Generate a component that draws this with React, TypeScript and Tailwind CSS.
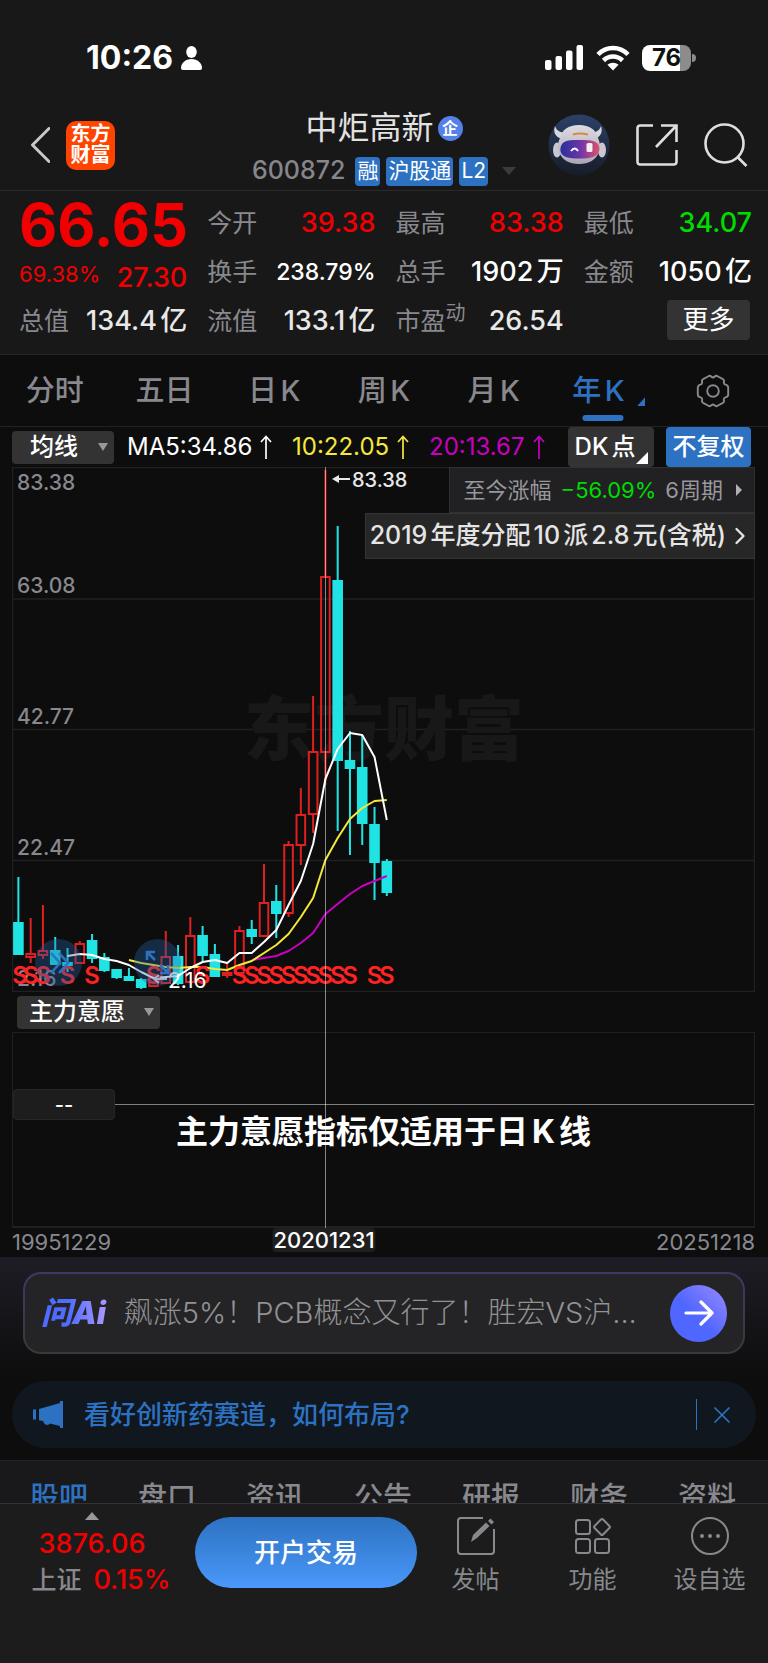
import React from 'react';
import { ChevronRight, X } from 'lucide-react';

const FONT = "font-[Inter,'Noto_Sans_CJK_SC',sans-serif]";

type Candle = [high: number, top: number, bottom: number, low: number, up: 0 | 1];

/** Yearly candles, 1995 - 2025, in chart units */
const candles: Candle[] = [
  [410, 456, 487, 487, 0],
  [451, 487, 490, 496, 1],
  [438, 484, 488, 492, 1],
  [470, 484, 497, 498, 0],
  [481, 496, 498, 505, 0],
  [474, 477, 496, 497, 1],
  [467, 474, 491, 496, 0],
  [486, 491, 503, 505, 0],
  [502, 503, 510, 512, 0],
  [501, 510, 513, 513, 0],
  [511, 513, 520, 522, 0],
  [508, 511, 519, 520, 1],
  [464, 490, 516, 517, 1],
  [478, 490, 516, 518, 0],
  [450, 469, 515, 516, 1],
  [459, 469, 488, 494, 0],
  [477, 488, 509, 510, 0],
  [497, 506, 508, 511, 1],
  [459, 464, 506, 507, 1],
  [453, 463, 469, 477, 0],
  [397, 436, 469, 470, 1],
  [418, 435, 446, 471, 0],
  [374, 378, 446, 450, 1],
  [321, 348, 378, 398, 1],
  [229, 285, 347, 366, 1],
  [3, 110, 285, 318, 1],
  [59, 114, 293, 364, 0],
  [264, 294, 301, 388, 0],
  [268, 301, 356, 378, 0],
  [340, 358, 395, 433, 0],
  [392, 395, 425, 429, 0],
];

const ma5 = [
  489, 487, 488, 492, 494, 498, 505, 511, 510, 509, 501, 495, 493, 496, 486, 486, 475, 463, 438, 414, 377, 312, 282,
  266, 268, 290, 353,
];
const ma10 = [
  493, 496, 498, 500, 501, 500, 500, 502, 503, 498, 494, 486, 478, 467, 450, 431, 393, 371, 352, 341, 334, 333,
];
const ma20 = [493, 491, 489, 484, 476, 466, 447, 437, 427, 419, 414, 409];

const signals = [0, 1, 2, 4, 6, 11, 15, 18, 19, 20, 21, 22, 23, 24, 25, 26, 27, 29, 30];

const getX = (index: number) => 6.4 + index * 12.28;

const getPoints = (values: number[], start: number) =>
  values.map((value, index) => `${getX(start + index)},${value}`).join(' ');

const StatusBar = () => (
  <div className="h-[105px] pt-[10px] pl-[86px] pr-[72px] flex items-center justify-between text-white">
    <div className="flex items-center gap-2">
      <span className="text-[32px] font-bold">10:26</span>
      <svg className="w-[21px] h-6" viewBox="0 0 21 24" fill="currentColor">
        <ellipse cx="10.5" cy="6" rx="5.3" ry="6" />
        <path d="M0 22c0-5 4.500-9 10.500-9s10.500 4 10.500 9c0 1.300-.7 2-2 2H2c-1.300 0-2-.7-2-2z" />
      </svg>
    </div>
    <div className="flex items-center gap-3">
      <svg className="w-[39px] h-[26px]" viewBox="0 0 39 26" fill="currentColor">
        <rect x="0" y="15" width="6.500" height="10" rx="2" />
        <rect x="10.500" y="11" width="6.500" height="14" rx="2" />
        <rect x="21" y="5.500" width="6.500" height="19.500" rx="2" />
        <rect x="31.500" y="0" width="6.500" height="25" rx="2" />
      </svg>
      <svg className="w-[34px] h-[26px]" viewBox="0 0 34 26" fill="none" stroke="currentColor">
        <path d="M2 9.500C10.500.9 23.500.9 32 9.500" strokeWidth="4.600" />
        <path d="M7.500 15.500c5.500-5.300 13.500-5.300 19 0" strokeWidth="4.600" />
        <path d="M17 25.500l-5.600-5.700c3.200-2.800 8-2.800 11.200 0z" fill="currentColor" stroke="none" />
      </svg>
      <div className="flex items-center gap-px">
        <div className="w-[49px] h-[26px] rounded-lg bg-linear-to-r from-white from-77% to-[#8c8c8c] to-77% text-[#111] text-2xl font-bold flex items-center justify-center">
          76
        </div>
        <div className="w-1 h-2 rounded-r-full bg-[#8c8c8c]" />
      </div>
    </div>
  </div>
);

const RobotAvatar = () => (
  <svg className="w-[62px] h-[62px]" viewBox="0 0 62 62">
    <defs>
      <linearGradient id="robot-bg" x1="0" y1="0" x2="0" y2="1">
        <stop offset="0" stopColor="#2c4068" />
        <stop offset="1" stopColor="#171c28" />
      </linearGradient>
      <linearGradient id="robot-head" x1="0" y1="0" x2="0" y2="1">
        <stop offset="0" stopColor="#dddbe2" />
        <stop offset="1" stopColor="#aaa6b4" />
      </linearGradient>
      <linearGradient id="robot-face" x1="0" y1="0" x2="1" y2="0">
        <stop offset="0" stopColor="#27309a" />
        <stop offset=".5" stopColor="#6a35a8" />
        <stop offset="1" stopColor="#e0526c" />
      </linearGradient>
    </defs>
    <circle cx="31" cy="31" r="30.500" fill="url(#robot-bg)" />
    <path
      d="M7 12c-2 6 0 11 7 13l6-6c-6 0-11-1-13-7zM53 12c2 6 0 11-7 13l-6-6c6 0 11-1 13-7z"
      fill="#d9d7de"
    />
    <ellipse cx="9" cy="36" rx="4" ry="7.500" fill="#c9c6d0" />
    <ellipse cx="54" cy="36" rx="4" ry="7.500" fill="#c9c6d0" />
    <path
      d="M31 11c11 0 17 5 19 13 2 5 3 9 1 14-3 8-10 12-20 12s-17-4-20-12c-2-5-1-9 1-14 2-8 8-13 19-13z"
      fill="url(#robot-head)"
    />
    <path d="M25 20.500q6-2 15 0" stroke="#d98a3c" strokeWidth="2.200" fill="none" />
    <path
      d="M31 26c9 0 16 0 19 4 3 5 1 11-5 13-8 2-20 2-27 0-6-2-7-8-4-13 3-4 9-4 17-4z"
      fill="url(#robot-face)"
    />
    <path d="M23 37q4-5 7 0" stroke="#fff" strokeWidth="2" fill="none" />
    <rect x="38.500" y="29" width="6" height="9" rx="1.500" fill="#fff" opacity=".9" />
  </svg>
);

const Tag = ({ children }: { children: React.ReactNode }) => (
  <span className="h-[29px] px-[2px] rounded-sm bg-[#2d72c2] text-white text-[21px] flex items-center">{children}</span>
);

const Header = () => (
  <header className="h-[86px] border-b border-[#2a2a2a] grid grid-cols-[1fr_auto_1fr] items-center">
    <div className="flex items-center gap-4 pl-[30px] pb-3">
      <button aria-label="返回" className="text-[#c8c8c8]">
        <svg className="w-5 h-9" viewBox="0 0 20 36" fill="none" stroke="currentColor" strokeWidth="3">
          <path d="M19 1.500L2.500 18 19 34.500" strokeLinecap="round" strokeLinejoin="round" />
        </svg>
      </button>
      <a
        href="#home"
        className="w-[49px] h-[49px] rounded-[10px] bg-[#ff4400] text-white text-xl leading-[21px] font-bold text-center flex flex-col justify-center"
      >
        <span>东方</span>
        <span>财富</span>
      </a>
    </div>
    <div className="flex flex-col items-center pb-[6px]">
      <h1 className="flex items-center gap-1 text-[#e2e2e2] text-[32px] leading-[46px]">
        中炬高新
        <span className="w-[25px] h-[25px] rounded-full bg-[#5580e8] text-white text-base leading-[25px] font-bold text-center">
          企
        </span>
      </h1>
      <div className="flex items-center gap-[6px] h-10">
        <span className="text-[25px] font-medium text-[#86868c] mr-1">600872</span>
        <Tag>融</Tag>
        <Tag>沪股通</Tag>
        <Tag>L2</Tag>
        <span className="ml-2 border-x-[7px] border-t-8 border-x-transparent border-t-[#3c3c3e]" />
      </div>
    </div>
    <div className="flex items-center justify-end gap-[26px] pr-5 pb-3 text-[#dedede]">
      <button aria-label="智能助手">
        <RobotAvatar />
      </button>
      <button aria-label="分享">
        <svg className="w-[42px] h-[42px]" viewBox="0 0 42 42" fill="none" stroke="currentColor" strokeWidth="2.600">
          <path d="M17 1.500H4A2.500 2.500 0 0 0 1.500 4v34A2.500 2.500 0 0 0 4 40.500h34a2.500 2.500 0 0 0 2.500-2.500V26" />
          <path d="M25 1.500h15.500V18M40.500 1.500L20 23" />
        </svg>
      </button>
      <button aria-label="搜索">
        <svg className="w-[44px] h-[44px]" viewBox="0 0 44 44" fill="none" stroke="currentColor" strokeWidth="2.600">
          <circle cx="20.500" cy="20.500" r="19" />
          <path d="M33 33.500l9.500 9.500" />
        </svg>
      </button>
    </div>
  </header>
);

interface QuoteCellProps {
  label: string;
  value: string;
  sup?: string;
  valueClass?: string;
}

const QuoteCell: React.FC<QuoteCellProps> = ({ label, value, sup, valueClass = 'text-[27px] text-[#e8e8e8]' }) => (
  <div className="flex items-center justify-between whitespace-nowrap">
    <span className="flex text-[25px] text-[#88888e]">
      {label}
      {sup && <span className="text-xl -mt-1">{sup}</span>}
    </span>
    <span className={`font-medium ${valueClass}`}>{value}</span>
  </div>
);

const Quote = () => (
  <section className="pt-2 pb-2 pl-[19px] pr-4 grid grid-cols-4 gap-x-5 auto-rows-[49px] border-b border-[#242424]">
    <div className="flex items-center pt-1 text-[59px] font-bold text-[#f00000]">66.65</div>
    <QuoteCell label="今开" value="39.38" valueClass="text-[27px] text-[#f00000]" />
    <QuoteCell label="最高" value="83.38" valueClass="text-[27px] text-[#f00000]" />
    <QuoteCell label="最低" value="34.07" valueClass="text-[27px] text-[#00dc00]" />
    <div className="flex items-center justify-between pt-1 text-[#f00000]">
      <span className="text-[22px]">69.38%</span>
      <span className="text-[27px] pt-2 font-medium">27.30</span>
    </div>
    <QuoteCell label="换手" value="238.79%" valueClass="text-[23px] text-white" />
    <QuoteCell label="总手" value="1902万" valueClass="text-[27px] text-white" />
    <QuoteCell label="金额" value="1050亿" valueClass="text-[27px] text-white" />
    <QuoteCell label="总值" value="134.4亿" />
    <QuoteCell label="流值" value="133.1亿" />
    <QuoteCell label="市盈" sup="动" value="26.54" />
    <div className="flex items-center justify-end pr-[2px] pb-1">
      <button className="w-[83px] h-10 rounded bg-[#333] text-white text-[26px] leading-none">更多</button>
    </div>
  </section>
);

const periods = ['分时', '五日', '日K', '周K', '月K', '年K'];

const PeriodTabs = () => (
  <nav className="h-[72px] grid grid-cols-7 border-b border-[#222]">
    {periods.map((period) => {
      const active = period === '年K';
      return (
        <button
          key={period}
          className={`relative text-[29px] font-medium ${active ? 'pr-[10px] text-[#2d72c2]' : 'text-[#88888e]'}`}
        >
          {period}
          {active && (
            <>
              <span className="absolute right-[13px] bottom-5 w-2 h-[9px] bg-[#2d72c2] [clip-path:polygon(100%_0,100%_100%,0_100%)]" />
              <span className="absolute bottom-[5px] left-1/2 -translate-x-1/2 w-[41px] h-[6px] rounded-full bg-[#2d72c2]" />
            </>
          )}
        </button>
      );
    })}
    <button aria-label="设置" className="flex items-center justify-center text-[#88888e]">
      <svg className="w-[34px] h-[34px]" viewBox="0 0 34 34" fill="none" stroke="currentColor" strokeWidth="1.900">
        <path
          strokeLinejoin="round"
          d="M12 2.500q2-1.500 3.500.3 1.500 1.400 3 0Q20 1 22 2.500l4.500 2.300q2 .9 1.400 3.200-.4 2 1.600 2.600 2.700.7 2.700 3v6.800q0 2.300-2.700 3-2 .6-1.600 2.600.6 2.300-1.400 3.200L22 31.500q-2 1.500-3.500-.3-1.500-1.400-3 0-1.500 1.800-3.500.3l-4.500-2.300q-2-.9-1.400-3.200.4-2-1.600-2.600-2.700-.7-2.700-3v-6.800q0-2.300 2.700-3 2-.6 1.600-2.600-.6-2.300 1.400-3.200z"
        />
        <circle cx="17" cy="17" r="5.800" />
      </svg>
    </button>
  </nav>
);

const Caret = () => <span className="border-x-[5px] border-t-8 border-x-transparent border-t-[#98989c]" />;

const UpArrow = () => (
  <svg className="w-3 h-6" viewBox="0 0 12 24" fill="none" stroke="currentColor" strokeWidth="1.700">
    <path d="M6 24V1.500M1 7l5-5.500L11 7" />
  </svg>
);

const IndicatorRow = () => (
  <div className="h-10 flex items-center text-2xl whitespace-nowrap">
    <button className="w-[102px] h-[33px] pl-[18px] pr-[6px] rounded bg-[#333] text-white font-medium leading-none flex items-center justify-between">
      均线
      <Caret />
    </button>
    <span className="ml-[13px] w-[165px] flex items-center gap-2 text-white">
      MA5:34.86
      <UpArrow />
    </span>
    <span className="w-[137px] flex items-center gap-2 text-[#f5e83c]">
      10:22.05
      <UpArrow />
    </span>
    <span className="flex items-center gap-2 text-[#c800c0]">
      20:13.67
      <UpArrow />
    </span>
    <div className="ml-auto flex gap-3 pr-1 font-medium text-white">
      <button className="relative w-[86px] h-10 pr-3 rounded bg-[#333]">
        DK点
        <span className="absolute right-[6px] bottom-[3px] w-3 h-3 bg-white [clip-path:polygon(100%_0,100%_100%,0_100%)]" />
      </button>
      <button className="w-[85px] h-10 rounded bg-[#2d72c2]">不复权</button>
    </div>
  </div>
);

const KLineChart = () => (
  <svg className="block w-full" viewBox="0 0 743 525">
    <g stroke="#202020" strokeWidth="1.500">
      <path d="M0 .5H743M0 132H743M0 262.500H743M0 393.500H743M0 524.500H743M.5 0V525M742.500 0V525" />
    </g>
    <text x="372" y="288" textAnchor="middle" fontSize="70" fontWeight="900" fill="#181818">
      东方财富
    </text>
    <g fontSize="21" fontWeight="500" fill="#88888e">
      <text x="5" y="23">83.38</text>
      <text x="5" y="126">63.08</text>
      <text x="5" y="257">42.77</text>
      <text x="5" y="388">22.47</text>
      <text x="5" y="519">2.16</text>
    </g>
    {candles.map(([high, top, bottom, low, up], index) => {
      const x = getX(index);
      const color = up ? '#e02020' : '#20e4e4';
      return (
        <g key={index} stroke={color} strokeWidth="2">
          <path d={`M${x} ${high}V${top}M${x} ${bottom}V${low}`} />
          <rect x={x - 4.3} y={top} width="8.600" height={bottom - top} fill={up ? 'none' : color} />
        </g>
      );
    })}
    <g fill="none" strokeWidth="2" strokeLinejoin="round">
      <polyline points={getPoints(ma20, 19)} stroke="#c800c0" />
      <polyline points={getPoints(ma10, 9)} stroke="#f5e83c" />
      <polyline points={getPoints(ma5, 4)} stroke="#fff" />
    </g>
    <g fontSize="24" fontWeight="600" fill="#ff2222" textAnchor="middle">
      {signals.map((index) => (
        <text key={index} x={Math.max(getX(index), 8)} y="517">
          S
        </text>
      ))}
    </g>
    <text x="156" y="521" fontSize="21" fill="#fff">
      2.16
    </text>
    <path d="M155 512h-13m5-4l-5 4 5 4" stroke="#ddd" strokeWidth="2" fill="none" />
    <circle cx="46.500" cy="495.500" r="23.500" fill="#2460a8" opacity=".35" />
    <circle cx="145.500" cy="495.500" r="23.500" fill="#2460a8" opacity=".35" />
    <g fill="none" stroke="#2d72c2" strokeWidth="2.600">
      <path d="M39 486l9 10-9 10M47 486l9 10-9 10" />
      <path d="M143 485h-8v8M135 485l8 8M148 506h8v-8M156 506l-8-8" />
    </g>
    <g fill="#e8e8e8" stroke="#e8e8e8">
      <path d="M326 12h12" strokeWidth="2" />
      <path d="M320 12l7-4v8z" stroke="none" />
      <text x="340" y="20" fontSize="20" fontWeight="500" stroke="none">
        83.38
      </text>
    </g>
  </svg>
);

const ChartPanel = () => (
  <section className="pl-3 pr-[13px]">
    <IndicatorRow />
    <div className="relative">
      <KLineChart />
      <div className="absolute top-0 right-0 flex flex-col items-end whitespace-nowrap">
        <button className="h-[46px] pl-[14px] pr-3 flex items-center gap-[9px] bg-[#212124] border border-[#303030] text-[22px] text-[#98989c] [text-autospace:no-autospace]">
          <span>至今涨幅</span>
          <span className="text-[#00dc00]">−56.09%</span>
          <span>6周期</span>
          <span className="ml-1 border-y-[6px] border-l-[6px] border-y-transparent border-l-[#b0b0b0]" />
        </button>
        <button className="h-[46px] pl-1 flex items-center bg-[#272727] border border-[#343434] text-[25px] font-medium text-[#e5e5e5]">
          2019年度分配10派2.8元(含税)
          <ChevronRight className="w-7 h-7" strokeWidth={2} />
        </button>
      </div>

      <div className="h-10 pl-[5px] flex items-center">
        <button className="w-[143px] h-[33px] pl-3 pr-[6px] rounded bg-[#333] text-white text-2xl leading-none font-medium flex items-center justify-between">
          主力意愿
          <Caret />
        </button>
      </div>

      <div className="relative h-[196px] pt-14 border border-b-2 border-[#202020]">
        <div className="flex items-center">
          <div className="w-[102px] h-[31px] rounded-sm bg-[#1d1d1d] border border-[#262626] text-white text-xl font-medium flex items-center justify-center">
            --
          </div>
          <div className="flex-1 h-px bg-[#808080]" />
        </div>
        <p className="text-center text-[32px] leading-6 font-bold text-white">主力意愿指标仅适用于日K线</p>
      </div>

      {/* Crosshair */}
      <div className="absolute top-0 bottom-0 left-[42%] w-px translate-x-px bg-white/50" />
    </div>
    <div className="relative h-[29px] flex justify-between text-[22px] leading-7 text-[#88888e]">
      <span>19951229</span>
      <span className="absolute left-[42%] -translate-x-1/2 h-6 px-px leading-6 rounded-sm bg-[#1f1f1f] font-medium text-white">
        20201231
      </span>
      <span>20251218</span>
    </div>
  </section>
);

const AskAi = () => (
  <section className="px-[23px] pt-[15px] pb-[27px] bg-linear-to-b from-[#1e1d25] to-[#0d0d0d]">
    <form className="rounded-[18px] p-[2px] bg-linear-to-b from-[#3a3a66] to-[#3a3838]">
      <div className="h-[78px] rounded-2xl bg-[#242426] flex items-center px-4 gap-[14px]">
        <label
          htmlFor="ask"
          className="pr-1 text-[31px] leading-9 font-black italic whitespace-nowrap text-transparent bg-clip-text bg-linear-to-r from-[#4f6cff] from-40% to-[#b49aff] [text-autospace:no-autospace]"
        >
          问Ai
        </label>
        <input
          id="ask"
          type="text"
          placeholder="飙涨5%！PCB概念又行了！胜宏VS沪..."
          className="flex-1 min-w-0 bg-transparent outline-none text-[29px] font-light text-white placeholder:text-[#929294] [text-autospace:no-autospace]"
        />
        <button
          type="button"
          aria-label="提问"
          className="w-[57px] h-[57px] rounded-full bg-linear-to-tr from-[#4f66ff] from-45% to-[#9a88ff] flex items-center justify-center"
        >
          <svg className="w-[30px] h-[26px]" viewBox="0 0 30 26" fill="none" stroke="#fff" strokeWidth="3.200" strokeLinecap="round">
            <path d="M2 13h26M17 2l11 11-11 11" strokeLinejoin="round" />
          </svg>
        </button>
      </div>
    </form>
  </section>
);

const Notice = () => (
  <div className="px-3 pb-3">
    <div className="h-[67px] rounded-[33px] bg-[#10171e] text-[#2d72c2] flex items-center pl-5 pr-5">
      <svg className="w-8 h-[27px]" viewBox="0 0 32 27" fill="currentColor">
        <path d="M1 8.500h3v10H1zM7 8l21-6V0h3v27h-3v-2l-10-2.500c-1 2-5 2-6-.5l-1-2-4-.7z" />
      </svg>
      <a href="#notice" className="ml-5 text-[26px] font-medium">
        看好创新药赛道，如何布局?
      </a>
      <span className="ml-auto w-px h-[31px] bg-[#2d72c2]" />
      <button aria-label="关闭" className="ml-[11px]">
        <X className="w-7 h-7" strokeWidth={1.5} />
      </button>
    </div>
  </div>
);

const sections = ['股吧', '盘口', '资讯', '公告', '研报', '财务', '资料'];

const SectionTabs = () => (
  <nav className="h-[43px] pl-[5px] pr-[7px] pt-[17px] overflow-hidden grid grid-cols-7 items-start bg-[#19191b] border-t border-[#242424]">
    {sections.map((section, index) => (
      <button
        key={section}
        className={`text-[29px] leading-10 font-medium ${index === 0 ? 'text-[#2d72c2]' : 'text-[#88888e]'}`}
      >
        {section}
      </button>
    ))}
  </nav>
);

const PostIcon = () => (
  <svg className="w-[38px] h-[38px]" viewBox="0 0 38 38" fill="none" stroke="currentColor" strokeWidth="2">
    <path d="M26 1H4a3 3 0 0 0-3 3v30a3 3 0 0 0 3 3h30a3 3 0 0 0 3-3V12" />
    <path d="M14 25l2-7L29 5.500l3.500 3.500L20 21zM31 4l2.500-2.500L37 5l-2.500 2.500z" fill="currentColor" stroke="none" />
  </svg>
);

const FeatureIcon = () => (
  <svg className="w-[38px] h-[38px]" viewBox="0 0 38 38" fill="none" stroke="currentColor" strokeWidth="2">
    <rect x="2" y="3" width="14" height="14" rx="2.500" />
    <rect x="2" y="22" width="14" height="14" rx="2.500" />
    <rect x="21" y="22" width="14" height="14" rx="2.500" />
    <rect x="22" y="4" width="12" height="12" rx="1.500" transform="rotate(45 28 10)" />
  </svg>
);

const FollowIcon = () => (
  <svg className="w-[38px] h-[38px]" viewBox="0 0 38 38" fill="none" stroke="currentColor" strokeWidth="2">
    <circle cx="19" cy="19" r="18" />
    <g fill="currentColor" stroke="none">
      <circle cx="11" cy="19" r="2" />
      <circle cx="19" cy="19" r="2" />
      <circle cx="27" cy="19" r="2" />
    </g>
  </svg>
);

const actions = [
  { label: '发帖', icon: <PostIcon /> },
  { label: '功能', icon: <FeatureIcon /> },
  { label: '设自选', icon: <FollowIcon /> },
];

const BottomBar = () => (
  <footer className="pt-2 pb-[60px] flex items-start bg-[#1c1c1c] border-t border-[#333]">
    <a href="#index" className="w-[184px] mr-[11px] flex flex-col items-center text-[#f00000] text-[27px] font-medium">
      <span className="border-x-[7px] border-b-8 border-x-transparent border-b-[#98989c]" />
      <span className="mt-1 leading-10">3876.06</span>
      <span className="flex gap-3 leading-8 pl-[18px]">
        <span className="text-[#88888e] text-[25px]">上证</span>
        0.15%
      </span>
    </a>
    <button className="w-[222px] h-[71px] mt-[5px] rounded-full bg-linear-to-b from-[#2d72c2] to-[#4a98fa] text-white text-[26px] font-medium">
      开户交易
    </button>
    <div className="flex-1 mt-[5px] grid grid-cols-3">
      {actions.map(({ label, icon }) => (
        <button key={label} className="flex flex-col items-center text-2xl leading-[50px] text-[#88888e]">
          {icon}
          {label}
        </button>
      ))}
    </div>
  </footer>
);

export default function App() {
  return (
    <div className={`${FONT} [text-autospace:normal] min-h-screen bg-[#1c1c1c]`}>
      <div className="bg-[#181818]">
        <StatusBar />
        <Header />
        <Quote />
      </div>
      <main className="bg-[#0d0d0d]">
        <PeriodTabs />
        <ChartPanel />
        <AskAi />
        <Notice />
        <SectionTabs />
      </main>
      <BottomBar />
    </div>
  );
}
